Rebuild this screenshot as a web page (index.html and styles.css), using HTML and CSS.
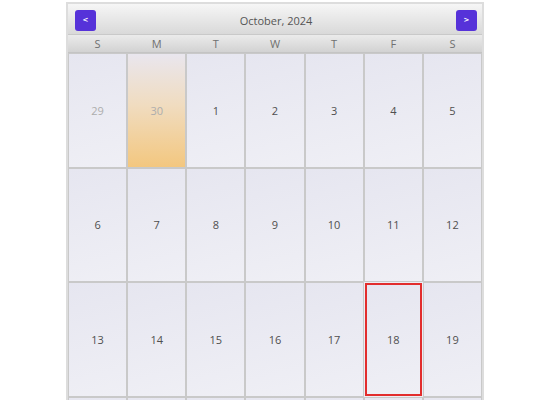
FILE: index.html
```html
<!DOCTYPE html>
<html>
<head>
<meta charset="utf-8">
<link rel="stylesheet" href="styles.css">
</head>
<body>
<div class="calendar">
  <div class="header">
    <button class="nav">&lt;</button>
    <div class="title">October, 2024</div>
    <button class="nav">&gt;</button>
  </div>
  <div class="daynames">
    <div>S</div><div>M</div><div>T</div><div>W</div><div>T</div><div>F</div><div>S</div>
  </div>
  <div class="grid">
    <div class="cell other">29</div>
    <div class="cell other today">30</div>
    <div class="cell">1</div>
    <div class="cell">2</div>
    <div class="cell">3</div>
    <div class="cell">4</div>
    <div class="cell">5</div>
    <div class="cell">6</div>
    <div class="cell">7</div>
    <div class="cell">8</div>
    <div class="cell">9</div>
    <div class="cell">10</div>
    <div class="cell">11</div>
    <div class="cell">12</div>
    <div class="cell">13</div>
    <div class="cell">14</div>
    <div class="cell">15</div>
    <div class="cell">16</div>
    <div class="cell">17</div>
    <div class="cell selected">18</div>
    <div class="cell">19</div>
    <div class="cell">20</div>
    <div class="cell">21</div>
    <div class="cell">22</div>
    <div class="cell">23</div>
    <div class="cell">24</div>
    <div class="cell">25</div>
    <div class="cell">26</div>
  </div>
</div>
</body>
</html>
```

FILE: styles.css
```css
html, body {
  margin: 0;
  padding: 0;
  background: #ffffff;
  overflow: hidden;
  height: 400px;
}
body {
  font-family: "Open Sans", "Noto Sans", sans-serif;
}
.calendar {
  width: 414px;
  margin: 2px auto 0;
  border: 2px solid #dddddd;
  border-bottom: none;
  background: #ececf2;
}
.header {
  height: 31px;
  box-sizing: border-box;
  padding: 6px 5px 4px 7px;
  display: flex;
  align-items: flex-start;
  justify-content: space-between;
  background: linear-gradient(#f6f6f6, #d9d9d9);
  border-bottom: 1px solid #c9c9c9;
}
.nav {
  width: 21px;
  height: 21px;
  padding: 0;
  border: none;
  border-radius: 3px;
  background: #5632d9;
  color: #ffffff;
  font-family: "DejaVu Sans", sans-serif;
  font-size: 7px;
  font-weight: bold;
  line-height: 21px;
  text-align: center;
}
.title {
  flex: 1;
  text-align: center;
  font-size: 11px;
  color: #555555;
  line-height: 21px;
}
.daynames {
  display: grid;
  grid-template-columns: repeat(7, 1fr);
  height: 17px;
  background: linear-gradient(#ebebeb, #d2d2d2);
  border-bottom: 1px solid #c4c4c4;
}
.daynames div {
  text-align: center;
  font-size: 11px;
  line-height: 17px;
  color: #707070;
}
.grid {
  display: grid;
  grid-template-columns: repeat(7, 1fr);
  grid-auto-rows: 114.5px;
}
.cell {
  box-sizing: border-box;
  border: 1px solid #c9c9c9;
  background: linear-gradient(165deg, #e6e6f0, #efeff5);
  display: flex;
  align-items: center;
  justify-content: center;
  font-size: 11px;
  color: #4f4f4f;
}
.cell.other {
  color: #adadad;
}
.cell.today {
  background: linear-gradient(#e9e6ee 0%, #f0dcc0 45%, #f3c77f 100%);
}
.cell.selected {
  border: 2px solid #e22d2d;
  margin: 1px;
}
```
